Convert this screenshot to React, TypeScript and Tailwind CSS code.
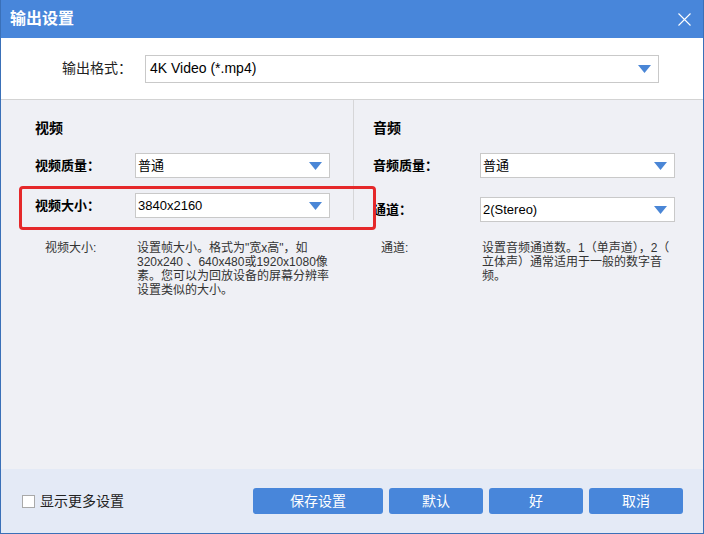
import React from "react";

const FONT = { fontFamily: '"Liberation Sans", "Noto Sans CJK SC", sans-serif' };

function Arrow() {
  return (
    <svg width="13" height="8" viewBox="0 0 13 8" className="shrink-0">
      <path d="M0 0 H13 L6.5 8 Z" fill="#4a86d6" />
    </svg>
  );
}

function Select({ value, className }: { value: string; className: string }) {
  return (
    <div
      className={`flex items-center justify-between border border-[#c9c9c9] bg-white pl-[2px] pr-[7px] text-[13px] text-black ${className}`}
    >
      <span>{value}</span>
      <Arrow />
    </div>
  );
}

function Row({ label, value, labelW, className = "" }: { label: string; value: string; labelW: string; className?: string }) {
  return (
    <div className={`flex items-center ${className}`}>
      <div className={`${labelW} text-[13px] font-bold text-black`}>{label}</div>
      <Select value={value} className="h-[25px] w-[195px]" />
    </div>
  );
}

export default function App() {
  return (
    <div className="relative flex h-[534px] w-[704px] flex-col overflow-hidden border-x border-b border-[#3a70b8] bg-white" style={FONT}>
      {/* title bar */}
      <div className="flex h-[38px] shrink-0 items-center justify-between bg-[#4886da] pl-[9px] pr-[12px]">
        <span className="text-[16px] font-bold text-white">输出设置</span>
        <svg width="13" height="13" viewBox="0 0 13 13">
          <path d="M0.5 0.5 L12.5 12.5 M12.5 0.5 L0.5 12.5" stroke="#fff" strokeWidth="1.1" />
        </svg>
      </div>

      {/* output format */}
      <div className="flex h-[62px] shrink-0 items-center border-b border-[#d3d3d3] bg-white pl-[61px]">
        <div className="w-[83px] text-[14px] text-[#222]">输出格式：</div>
        <Select value="4K Video (*.mp4)" className="h-[28px] w-[514px] pl-[4px] text-[14px]" />
      </div>

      {/* body */}
      <div className="flex flex-1 bg-[#eff0f5]">
        <div className="flex w-[352px] flex-col pl-[34px] pt-[18px]">
          <div className="h-[20px] text-[14px] font-bold leading-[20px] text-black">视频</div>
          <Row label="视频质量：" value="普通" labelW="w-[100px]" className="mt-[15px]" />
          <Row label="视频大小：" value="3840x2160" labelW="w-[100px]" className="mt-[15px]" />
          <div className="mt-[23px] flex pl-[10px] text-[12px] leading-[14px] text-[#333]">
            <div className="w-[92px]">视频大小:</div>
            <div className="w-[200px]">
              设置帧大小。格式为"宽x高"，如
              <br />
              320x240 、640x480或1920x1080像
              <br />
              素。您可以为回放设备的屏幕分辨率
              <br />
              设置类似的大小。
            </div>
          </div>
        </div>
        <div className="h-[120px] w-px bg-[#d6d6d8]" />
        <div className="flex flex-1 flex-col pl-[19px] pt-[18px]">
          <div className="h-[20px] text-[14px] font-bold leading-[20px] text-black">音频</div>
          <Row label="音频质量：" value="普通" labelW="w-[107px]" className="mt-[15px]" />
          <Row label="通道：" value="2(Stereo)" labelW="w-[107px]" className="mt-[19px]" />
          <div className="mt-[19px] flex pl-[8px] text-[12px] leading-[14px] text-[#333]">
            <div className="w-[101px]">通道:</div>
            <div className="w-[200px]">
              设置音频通道数。1（单声道），2（
              <br />
              立体声）通常适用于一般的数字音
              <br />
              频。
            </div>
          </div>
        </div>
      </div>

      {/* footer */}
      <div className="flex h-[64px] shrink-0 items-center justify-between bg-[#e4eaf6] pl-[21px] pr-[20px]">
        <label className="flex items-center gap-[5px] text-[14px] text-[#222]">
          <span className="h-[13px] w-[13px] border border-[#a9a9a9] bg-white" />
          显示更多设置
        </label>
        <div className="flex gap-[6px] text-[14px] text-white">
          <button className="h-[26px] w-[130px] rounded-[3px] bg-[#4886da]">保存设置</button>
          <button className="h-[26px] w-[94px] rounded-[3px] bg-[#4886da]">默认</button>
          <button className="h-[26px] w-[94px] rounded-[3px] bg-[#4886da]">好</button>
          <button className="h-[26px] w-[94px] rounded-[3px] bg-[#4886da]">取消</button>
        </div>
      </div>

      {/* red highlight annotation */}
      <div className="pointer-events-none absolute left-[18px] top-[186px] h-[44px] w-[357px] rounded-[4px] border-[3px] border-[#e5282a]" />
    </div>
  );
}
